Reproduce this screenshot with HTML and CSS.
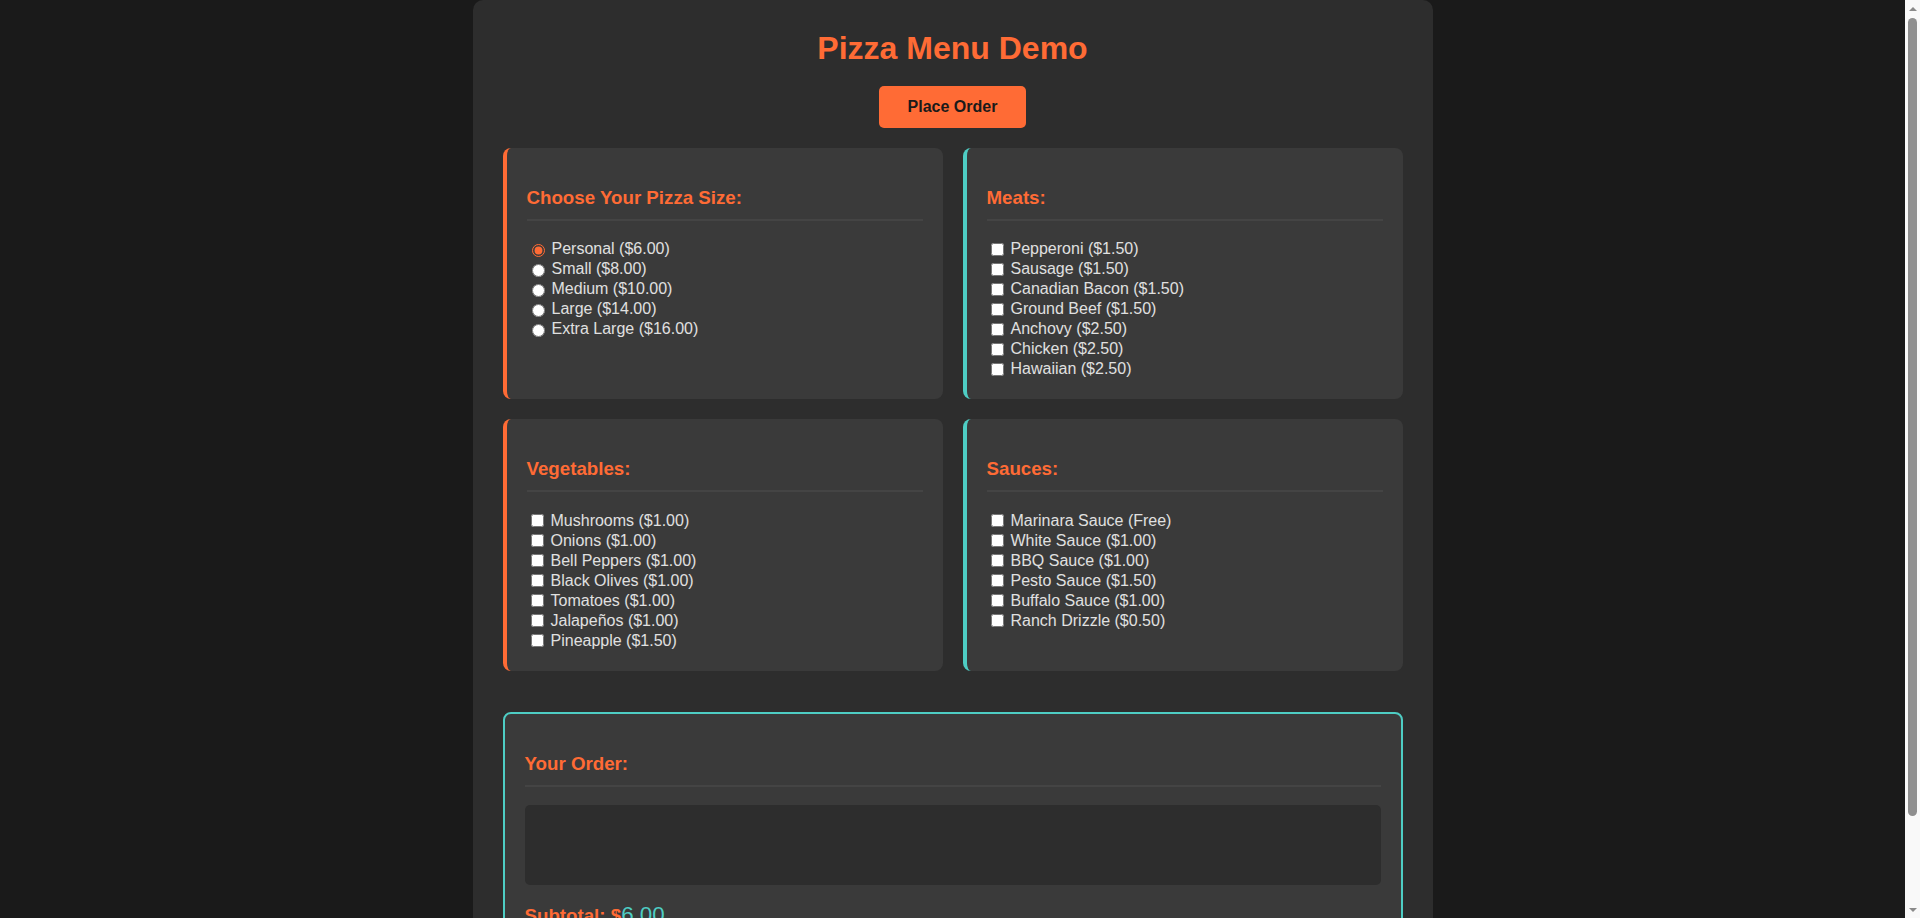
FILE: index.html
```html
<!DOCTYPE html>
<html lang="en">
<head>
<meta charset="utf-8">
<title>Pizza Menu Demo</title>
<link rel="stylesheet" href="styles.css">
</head>
<body>
<div class="page">
<div class="container">
  <header class="header">
    <h1 class="title">Pizza Menu Demo</h1>
    <button class="order-btn" type="button">Place Order</button>
  </header>

  <div class="menu-grid">
    <section class="card card-orange">
      <h3 class="card-title">Choose Your Pizza Size:</h3>
      <div class="options">
        <label class="option"><input type="radio" name="size" checked><span>Personal ($6.00)</span></label>
        <label class="option"><input type="radio" name="size"><span>Small ($8.00)</span></label>
        <label class="option"><input type="radio" name="size"><span>Medium ($10.00)</span></label>
        <label class="option"><input type="radio" name="size"><span>Large ($14.00)</span></label>
        <label class="option"><input type="radio" name="size"><span>Extra Large ($16.00)</span></label>
      </div>
    </section>

    <section class="card card-teal">
      <h3 class="card-title">Meats:</h3>
      <div class="options">
        <label class="option"><input type="checkbox"><span>Pepperoni ($1.50)</span></label>
        <label class="option"><input type="checkbox"><span>Sausage ($1.50)</span></label>
        <label class="option"><input type="checkbox"><span>Canadian Bacon ($1.50)</span></label>
        <label class="option"><input type="checkbox"><span>Ground Beef ($1.50)</span></label>
        <label class="option"><input type="checkbox"><span>Anchovy ($2.50)</span></label>
        <label class="option"><input type="checkbox"><span>Chicken ($2.50)</span></label>
        <label class="option"><input type="checkbox"><span>Hawaiian ($2.50)</span></label>
      </div>
    </section>

    <section class="card card-orange">
      <h3 class="card-title">Vegetables:</h3>
      <div class="options">
        <label class="option"><input type="checkbox"><span>Mushrooms ($1.00)</span></label>
        <label class="option"><input type="checkbox"><span>Onions ($1.00)</span></label>
        <label class="option"><input type="checkbox"><span>Bell Peppers ($1.00)</span></label>
        <label class="option"><input type="checkbox"><span>Black Olives ($1.00)</span></label>
        <label class="option"><input type="checkbox"><span>Tomatoes ($1.00)</span></label>
        <label class="option"><input type="checkbox"><span>Jalapeños ($1.00)</span></label>
        <label class="option"><input type="checkbox"><span>Pineapple ($1.50)</span></label>
      </div>
    </section>

    <section class="card card-teal">
      <h3 class="card-title">Sauces:</h3>
      <div class="options">
        <label class="option"><input type="checkbox"><span>Marinara Sauce (Free)</span></label>
        <label class="option"><input type="checkbox"><span>White Sauce ($1.00)</span></label>
        <label class="option"><input type="checkbox"><span>BBQ Sauce ($1.00)</span></label>
        <label class="option"><input type="checkbox"><span>Pesto Sauce ($1.50)</span></label>
        <label class="option"><input type="checkbox"><span>Buffalo Sauce ($1.00)</span></label>
        <label class="option"><input type="checkbox"><span>Ranch Drizzle ($0.50)</span></label>
      </div>
    </section>
  </div>

  <section class="order">
    <h3 class="card-title">Your Order:</h3>
    <div class="order-list"></div>
    <div class="subtotal">Subtotal: $<span class="amount">6.00</span></div>
  </section>
</div>
</div>
<div class="scrollbar" aria-hidden="true">
  <div class="sb-btn sb-up"></div>
  <div class="sb-track"><div class="sb-thumb"></div></div>
  <div class="sb-btn sb-down"></div>
</div>
</body>
</html>
```

FILE: styles.css
```css
html, body {
  margin: 0;
  padding: 0;
  height: 100%;
  overflow: hidden;
}

body {
  display: flex;
  background: #1a1a1a;
  color: #e0e0e0;
  font-family: "Liberation Sans", Arial, sans-serif;
  font-size: 16px;
}

.page {
  flex: 1 1 auto;
  min-width: 0;
  height: 100%;
  overflow: hidden;
}

/* window scrollbar as seen in the screenshot */
.scrollbar {
  flex: 0 0 15px;
  display: flex;
  flex-direction: column;
  height: 100%;
  background: #f9f9f9;
}

.sb-btn {
  flex: 0 0 17px;
  display: flex;
  align-items: center;
  justify-content: center;
}

.sb-up::before {
  content: "";
  border-left: 4px solid transparent;
  border-right: 4px solid transparent;
  border-bottom: 4px solid #8a8a8a;
}

.sb-down::before {
  content: "";
  border-left: 4px solid transparent;
  border-right: 4px solid transparent;
  border-top: 4px solid #8a8a8a;
}

.sb-track {
  flex: 1 1 auto;
  padding: 1px 0 0;
}

.sb-thumb {
  height: 798px;
  margin: 0 3px;
  background: #8f8f8f;
  border-radius: 5px;
}

.container {
  max-width: 900px;
  margin: 0 auto;
  padding: 30px;
  background: #2d2d2d;
  border-radius: 10px;
}

.header {
  display: flex;
  flex-direction: column;
  align-items: center;
}

.title {
  margin: 0 0 19px;
  font-size: 32px;
  font-weight: bold;
  color: #ff6b35;
  line-height: normal;
}

.order-btn {
  background: #ff6b35;
  color: #1a1a1a;
  border: none;
  border-radius: 5px;
  padding: 12px 29px;
  font-family: "Liberation Sans", Arial, sans-serif;
  font-size: 16px;
  font-weight: bold;
  line-height: normal;
  cursor: pointer;
}

.menu-grid {
  margin-top: 20px;
  display: grid;
  grid-template-columns: 1fr 1fr;
  gap: 20px;
}

.card {
  background: #3a3a3a;
  border-radius: 8px;
  padding: 20px;
}

.card-orange {
  border-left: 4px solid #ff6b35;
}

.card-teal {
  border-left: 4px solid #4ecdc4;
}

.card-title {
  margin: 18.72px 0;
  padding-bottom: 10px;
  border-bottom: 2px solid #444444;
  color: #ff6b35;
  font-size: 18.72px;
  font-weight: bold;
}

.options {
  display: flex;
  flex-direction: column;
}

.option {
  display: flex;
  align-items: center;
  gap: 4px;
  height: 20px;
  color: #e0e0e0;
}

.option input {
  accent-color: #ff6b35;
}

.order {
  margin-top: 41px;
  background: #3a3a3a;
  border: 2px solid #4ecdc4;
  border-radius: 8px;
  padding: 20px;
}

.order-list {
  background: #2d2d2d;
  border-radius: 5px;
  min-height: 80px;
}

.subtotal {
  margin-top: 17px;
  color: #ff6b35;
  font-size: 18.72px;
  font-weight: bold;
}

.amount {
  color: #4ecdc4;
  font-size: 22.4px;
  font-weight: normal;
}
```
